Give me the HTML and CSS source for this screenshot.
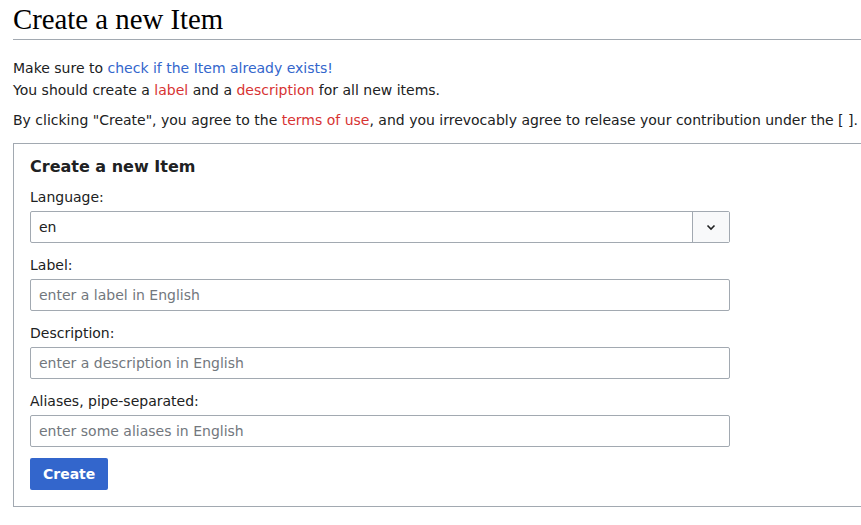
FILE: index.html
```html
<!DOCTYPE html>
<html>
<head>
<meta charset="utf-8">
<link rel="stylesheet" href="styles.css">
</head>
<body>
<div class="page">
  <h1 class="title">Create a new Item</h1>
  <p class="intro">Make sure to <a class="link" href="#">check if the Item already exists!</a><br>You should create a <a class="new" href="#">label</a> and a <a class="new" href="#">description</a> for all new items.</p>
  <p class="intro">By clicking "Create", you agree to the <a class="new" href="#">terms of use</a>, and you irrevocably agree to release your contribution under the [ ].</p>
  <div class="box">
    <div class="legend">Create a new Item</div>
    <div class="field">
      <label class="lbl">Language:</label>
      <div class="select">
        <span class="select-val">en</span>
        <span class="select-btn"><svg width="12" height="12" viewBox="0 0 12 12"><path d="M2.5 4.5 L6 8 L9.5 4.5" fill="none" stroke="#202122" stroke-width="1.6"/></svg></span>
      </div>
    </div>
    <div class="field">
      <label class="lbl">Label:</label>
      <div class="input"><span class="ph">enter a label in English</span></div>
    </div>
    <div class="field">
      <label class="lbl">Description:</label>
      <div class="input"><span class="ph">enter a description in English</span></div>
    </div>
    <div class="field">
      <label class="lbl">Aliases, pipe-separated:</label>
      <div class="input"><span class="ph">enter some aliases in English</span></div>
    </div>
    <button class="btn">Create</button>
  </div>
</div>
</body>
</html>
```
FILE: styles.css
```css
html, body { margin: 0; padding: 0; background: #fff; overflow: hidden; }
body { font-family: "DejaVu Sans", sans-serif; font-size: 14px; color: #202122; }
.page { padding: 0 0 0 13px; width: 848px; }
.title {
  font-family: "Liberation Serif", "Times New Roman", serif;
  font-weight: normal;
  font-size: 28.8px;
  line-height: 1.3;
  margin: 0;
  padding-top: 1px;
  border-bottom: 1px solid #a2a9b1;
  color: #000;
  height: 38px;
}
.intro { margin: 17px 0 0 0; line-height: 22px; }
.intro + .intro { margin-top: 8px; }
.link { color: #3366cc; text-decoration: none; }
.new { color: #d73333; text-decoration: none; }
.box {
  box-sizing: border-box;
  margin-top: 12px;
  border: 1px solid #a2a9b1;
  border-right: none;
  padding: 12px 16px 16px 16px;
  width: 848px;
}
.legend { font-weight: bold; font-size: 16px; line-height: 22px; margin-bottom: 8px; }
.field { margin-bottom: 11px; width: 700px; }
.lbl { display: block; line-height: 22px; margin-bottom: 3px; }
.select, .input {
  box-sizing: border-box;
  height: 32px;
  border: 1px solid #a2a9b1;
  border-radius: 2px;
  display: flex;
  align-items: center;
}
.select-val { flex: 1; padding-left: 8px; }
.select-btn {
  width: 36px;
  height: 30px;
  border-left: 1px solid #a2a9b1;
  background: #f8f9fa;
  display: flex;
  align-items: center;
  justify-content: center;
}
.input { padding-left: 8px; }
.ph { color: #72777d; }
.btn {
  display: block;
  margin-top: 2px;
  background: #3366cc;
  color: #fff;
  border: none;
  border-radius: 2px;
  font-family: "DejaVu Sans", sans-serif;
  font-weight: bold;
  font-size: 14px;
  height: 32px;
  padding: 0 13px;
}
```
